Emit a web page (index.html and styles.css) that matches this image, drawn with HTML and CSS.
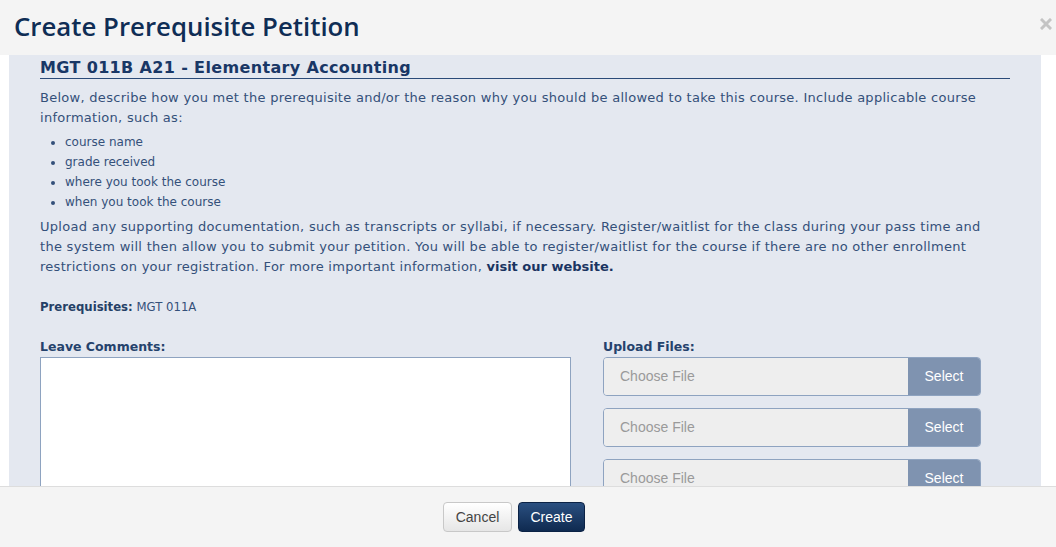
FILE: index.html
```html
<!DOCTYPE html>
<html lang="en">
<head>
<meta charset="utf-8">
<title>Create Prerequisite Petition</title>
<link rel="stylesheet" href="styles.css">
</head>
<body>
<div class="modal">
  <header class="modal-header">
    <h1 class="modal-title">Create Prerequisite Petition</h1>
    <button class="close" aria-label="Close">
      <svg width="12" height="12" viewBox="0 0 12 12"><path d="M2 2 L10 10 M10 2 L2 10" stroke="#c4c4c4" stroke-width="3" stroke-linecap="square"/></svg>
    </button>
  </header>
  <div class="modal-body">
    <div class="panel">
      <h2 class="course-title">MGT 011B A21 - Elementary Accounting</h2>
      <p class="intro">Below, describe how you met the prerequisite and/or the reason why you should be allowed to take this course. Include applicable course information, such as:</p>
      <ul class="info-list">
        <li>course name</li>
        <li>grade received</li>
        <li>where you took the course</li>
        <li>when you took the course</li>
      </ul>
      <p class="intro upload-note">Upload any supporting documentation, such as transcripts or syllabi, if necessary. Register/waitlist for the class during your pass time and the system will then allow you to submit your petition. You will be able to register/waitlist for the course if there are no other enrollment restrictions on your registration. For more important information, <a class="site-link" href="#">visit our website.</a></p>
      <p class="prereq"><strong>Prerequisites:</strong> MGT 011A</p>
      <div class="form-grid">
        <div class="col">
          <label class="field-label">Leave Comments:</label>
          <textarea class="comments"></textarea>
        </div>
        <div class="col">
          <label class="field-label">Upload Files:</label>
          <div class="file-list">
            <div class="file-row"><span class="file-name">Choose File</span><span class="file-btn">Select</span></div>
            <div class="file-row"><span class="file-name">Choose File</span><span class="file-btn">Select</span></div>
            <div class="file-row"><span class="file-name">Choose File</span><span class="file-btn">Select</span></div>
          </div>
        </div>
      </div>
    </div>
  </div>
  <footer class="modal-footer">
    <button class="btn btn-cancel">Cancel</button>
    <button class="btn btn-create">Create</button>
  </footer>
</div>
</body>
</html>
```
FILE: styles.css
```css
html, body {
  margin: 0;
  padding: 0;
  background: #ffffff;
}

.modal {
  width: 1056px;
  height: 547px;
  display: flex;
  flex-direction: column;
  overflow: hidden;
}

.modal-header {
  height: 55px;
  flex: 0 0 55px;
  background: #f4f4f4;
  display: flex;
  align-items: center;
  justify-content: space-between;
  padding: 0 4px 0 14px;
  box-sizing: border-box;
}

.modal-title {
  margin: 0;
  font-family: "Open Sans", "DejaVu Sans", sans-serif;
  font-weight: 600;
  font-size: 25.8px;
  line-height: 32px;
  color: #0f2d55;
  position: relative;
  top: -2px;
}

.close {
  border: 0;
  background: transparent;
  padding: 0;
  width: 12px;
  height: 12px;
  display: flex;
  position: relative;
  top: -4px;
}

.modal-body {
  flex: 1 1 auto;
  overflow: hidden;
  padding: 0 15px 0 9px;
}

.panel {
  background: #e4e8f0;
  height: 100%;
  padding: 0 31px;
  font-family: "DejaVu Sans", Verdana, sans-serif;
  color: #34507a;
}

.course-title {
  margin: 0;
  padding-top: 3px;
  font-size: 16px;
  letter-spacing: 0.35px;
  line-height: 20px;
  font-weight: bold;
  color: #193766;
  border-bottom: 1px solid #2a4a78;
}

.intro {
  margin: 9px 0 0;
  padding-right: 12px;
  font-size: 13px;
  letter-spacing: 0.28px;
  line-height: 20px;
}

.upload-note {
  margin-top: 5px;
}

.site-link {
  color: #1a3461;
  font-weight: bold;
  letter-spacing: 0;
  text-decoration: none;
}

.info-list {
  margin: 4px 0 0;
  padding-left: 25px;
  font-size: 12px;
  line-height: 20px;
}

.prereq {
  margin: 20px 0 0;
  font-size: 11.7px;
  line-height: 20px;
}

.prereq strong {
  color: #253f66;
}

.form-grid {
  display: grid;
  grid-template-columns: 531px 378px;
  column-gap: 32px;
  margin-top: 20px;
}

.field-label {
  display: block;
  font-size: 12.5px;
  font-weight: bold;
  line-height: 20px;
  color: #25426c;
}

.comments {
  display: block;
  width: 531px;
  height: 200px;
  box-sizing: border-box;
  border: 1px solid #8ea3c0;
  background: #ffffff;
  margin: 0;
  resize: none;
}

.file-list {
  display: flex;
  flex-direction: column;
  gap: 12px;
}

.file-row {
  display: flex;
  height: 39px;
  box-sizing: border-box;
  border: 1px solid #8ea3c0;
  border-radius: 4px;
  overflow: hidden;
  font-family: "Liberation Sans", Arial, sans-serif;
  font-size: 14px;
}

.file-name {
  flex: 1 1 auto;
  background: #eeeeee;
  color: #9a9a9a;
  display: flex;
  align-items: center;
  padding-left: 16px;
  padding-bottom: 1px;
}

.file-btn {
  flex: 0 0 72px;
  background: #7f93b0;
  color: #ffffff;
  display: flex;
  align-items: center;
  justify-content: center;
  padding-bottom: 1px;
}

.modal-footer {
  flex: 0 0 61px;
  height: 61px;
  box-sizing: border-box;
  background: #f4f4f4;
  border-top: 1px solid #dddddd;
  display: flex;
  align-items: center;
  justify-content: center;
  gap: 6px;
  padding-right: 28px;
}

.btn {
  font-family: "Liberation Sans", Arial, sans-serif;
  font-size: 14px;
  height: 30px;
  border-radius: 4px;
  padding: 0 8px;
  cursor: pointer;
}

.btn-cancel {
  width: 69px;
  color: #444444;
  background: linear-gradient(#ffffff, #e6e6e6);
  border: 1px solid #c8c8c8;
}

.btn-create {
  width: 67px;
  color: #ffffff;
  background: linear-gradient(#2a4f80, #0f2a50);
  border: 1px solid #0b2245;
}
```
